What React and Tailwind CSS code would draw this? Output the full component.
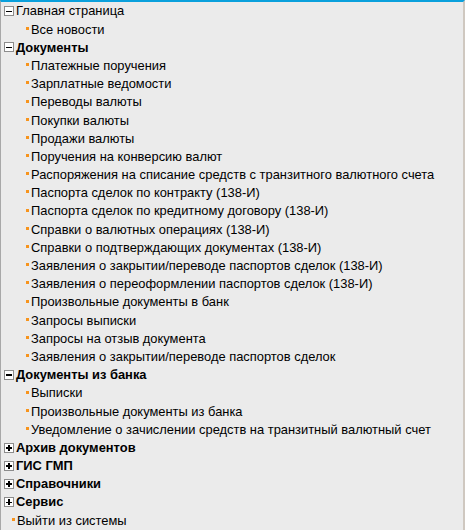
import React from "react";

const tree = [
  { title: "Главная страница", open: true, bold: false, items: ["Все новости"] },
  {
    title: "Документы",
    open: true,
    bold: true,
    items: [
      "Платежные поручения",
      "Зарплатные ведомости",
      "Переводы валюты",
      "Покупки валюты",
      "Продажи валюты",
      "Поручения на конверсию валют",
      "Распоряжения на списание средств с транзитного валютного счета",
      "Паспорта сделок по контракту (138-И)",
      "Паспорта сделок по кредитному договору (138-И)",
      "Справки о валютных операциях (138-И)",
      "Справки о подтверждающих документах (138-И)",
      "Заявления о закрытии/переводе паспортов сделок (138-И)",
      "Заявления о переоформлении паспортов сделок (138-И)",
      "Произвольные документы в банк",
      "Запросы выписки",
      "Запросы на отзыв документа",
      "Заявления о закрытии/переводе паспортов сделок",
    ],
  },
  {
    title: "Документы из банка",
    open: true,
    bold: true,
    items: [
      "Выписки",
      "Произвольные документы из банка",
      "Уведомление о зачислении средств на транзитный валютный счет",
    ],
  },
  { title: "Архив документов", open: false, bold: true, items: [] },
  { title: "ГИС ГМП", open: false, bold: true, items: [] },
  { title: "Справочники", open: false, bold: true, items: [] },
  { title: "Сервис", open: false, bold: true, items: [] },
];

function Toggle({ open }) {
  return (
    <span className="relative inline-block w-[10px] h-[10px] border border-[#8c8c8c] bg-white mr-[2px] shrink-0">
      <span className="absolute left-[1px] top-[3.5px] w-[6px] h-[1.5px] bg-black" />
      {!open && <span className="absolute left-[3.25px] top-[1px] w-[1.5px] h-[6px] bg-black" />}
    </span>
  );
}

function Leaf({ text, indent }) {
  return (
    <div className={`flex items-center h-[18.2px] ${indent ? "pl-[25px]" : "pl-[11px]"}`}>
      <span className="w-[3px] h-[3px] bg-[#f7941d] mr-[2px] mb-[2px] shrink-0" />
      <span className="whitespace-nowrap">{text}</span>
    </div>
  );
}

export default function App() {
  return (
    <div
      className="w-[465px] h-[530px] bg-[#ebebeb] border-l border-l-[#a8a8a8] border-t-2 border-t-[#0aa0dc] border-r-2 border-r-[#cfc8c0] overflow-hidden text-[12.9px] text-black"
      style={{ fontFamily: '"Liberation Sans", Arial, sans-serif' }}
    >
      <div>
        {tree.map((g) => (
          <div key={g.title}>
            <div className="flex items-center h-[18.2px] pl-[3px]">
              <Toggle open={g.open} />
              <span className={`whitespace-nowrap ${g.bold ? "font-bold" : ""}`}>{g.title}</span>
            </div>
            {g.items.map((it) => (
              <Leaf key={it} text={it} indent />
            ))}
          </div>
        ))}
        <Leaf text="Выйти из системы" />
      </div>
    </div>
  );
}
